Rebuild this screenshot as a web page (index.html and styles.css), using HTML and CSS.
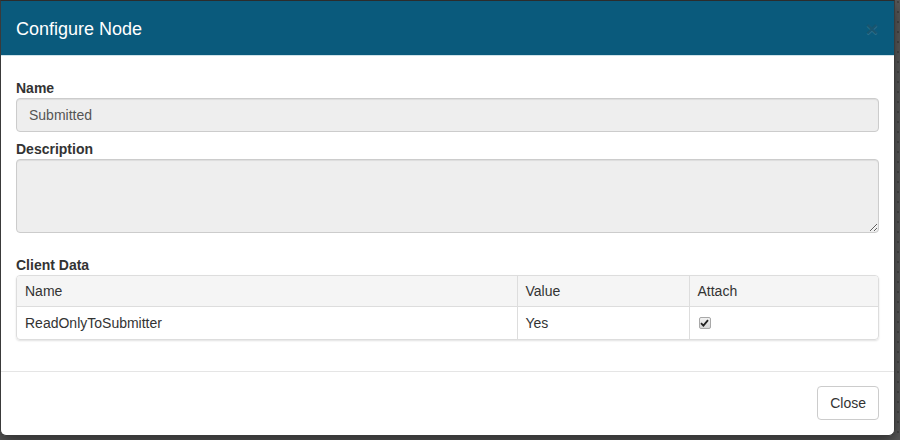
FILE: index.html
```html
<!DOCTYPE html>
<html>
<head>
<meta charset="utf-8">
<link rel="stylesheet" href="styles.css">
</head>
<body>
<div class="backdrop">
  <div class="modal">
    <div class="modal-header">
      <h4 class="modal-title">Configure Node</h4>
      <button class="close" type="button">&times;</button>
    </div>
    <div class="modal-body">
      <label class="lbl">Name</label>
      <input class="form-control" type="text" value="Submitted" readonly>
      <label class="lbl lbl-gap">Description</label>
      <textarea class="form-control area" readonly></textarea>
      <label class="lbl lbl-gap2">Client Data</label>
      <div class="panel">
        <table class="grid">
          <thead>
            <tr><th class="c1">Name</th><th class="c2">Value</th><th class="c3">Attach</th></tr>
          </thead>
          <tbody>
            <tr>
              <td>ReadOnlyToSubmitter</td>
              <td>Yes</td>
              <td><span class="chk"><svg width="9" height="8" viewBox="0 0 9 8"><path d="M1 4.2 L3.4 6.6 L8 1.2" fill="none" stroke="#222" stroke-width="1.8"/></svg></span></td>
            </tr>
          </tbody>
        </table>
      </div>
    </div>
    <div class="modal-footer">
      <button class="btn" type="button">Close</button>
    </div>
  </div>
  <div class="strip"></div>
</div>
</body>
</html>
```
FILE: styles.css
```css
* { box-sizing: border-box; }
html, body { margin: 0; padding: 0; }
body {
  width: 900px;
  height: 440px;
  overflow: hidden;
  background-color: #5a5a5a;
  background-image: radial-gradient(circle, #3e3e3e 0.6px, transparent 1px);
  background-size: 10px 10px;
  background-position: 3px 437px;
  font-family: "Liberation Sans", Arial, sans-serif;
  font-size: 14px;
  color: #333;
}
.backdrop { display: flex; flex-direction: column; }
.modal {
  width: 895px;
  height: 436px;
  background: #fff;
  border: 1px solid #3a3a3a;
  border-top-color: #2c2c2c;
  border-radius: 0 0 6px 6px;
  box-shadow: 0 5px 15px rgba(0,0,0,.5);
  display: flex;
  flex-direction: column;
  overflow: hidden;
}
.modal-header {
  background: #0a5a7c;
  height: 55px;
  padding: 0 15px;
  border-bottom: 1px solid #cfe3ea;
  display: flex;
  align-items: center;
  justify-content: space-between;
}
.modal-title {
  margin: 0;
  font-size: 18px;
  font-weight: normal;
  color: #fff;
  line-height: 26px;
  padding-top: 1px;
}
.close {
  background: none;
  border: 0;
  padding: 0;
  margin-right: 1px;
  font-family: "Liberation Sans", Arial, sans-serif;
  font-size: 21px;
  font-weight: bold;
  line-height: 1;
  color: #2a4f60;
  opacity: .45;
  text-shadow: 0 1px 0 rgba(255,255,255,.35);
}
.modal-body {
  padding: 22px 15px 0 15px;
  height: 315px;
  display: flex;
  flex-direction: column;
}
.lbl {
  display: block;
  font-weight: bold;
  line-height: 20px;
  height: 20px;
}
.lbl-gap { margin-top: 7px; }
.lbl-gap2 { margin-top: 22px; }
.form-control {
  display: block;
  width: 100%;
  height: 34px;
  padding: 6px 12px;
  font-family: "Liberation Sans", Arial, sans-serif;
  font-size: 14px;
  color: #555;
  background: #eee;
  border: 1px solid #ccc;
  border-radius: 4px;
  box-shadow: inset 0 1px 1px rgba(0,0,0,.075);
  outline: none;
}
.area { height: 74px; resize: vertical; }
.panel {
  border: 1px solid #ddd;
  border-radius: 4px;
  box-shadow: 0 1px 2px rgba(0,0,0,.12);
  overflow: hidden;
}
.grid {
  width: 100%;
  border-collapse: collapse;
  table-layout: fixed;
}
.grid th, .grid td {
  text-align: left;
  font-weight: normal;
  padding: 0 8px;
  border-left: 1px solid #ddd;
  color: #333;
}
.grid th:first-child, .grid td:first-child { border-left: 0; }
.grid th {
  background: #f5f5f5;
  height: 30px;
  border-bottom: 1px solid #ddd;
}
.grid td { height: 33px; }
.c1 { width: 500px; }
.c2 { width: 172px; }
.chk {
  display: inline-flex;
  align-items: center;
  justify-content: center;
  width: 12px;
  height: 12px;
  margin-left: 1px;
  vertical-align: middle;
  border: 1px solid #a8a8a8;
  border-radius: 2px;
  background: linear-gradient(#f2f2f2, #d6d6d6);
  position: relative;
  top: -1px;
}
.modal-footer {
  border-top: 1px solid #e5e5e5;
  padding: 14px 15px 15px;
  display: flex;
  justify-content: flex-end;
}
.btn {
  height: 34px;
  padding: 6px 12px;
  background: #fff;
  border: 1px solid #ccc;
  border-radius: 4px;
  font-family: "Liberation Sans", Arial, sans-serif;
  font-size: 14px;
  color: #333;
}
.strip { height: 4px; }
```
